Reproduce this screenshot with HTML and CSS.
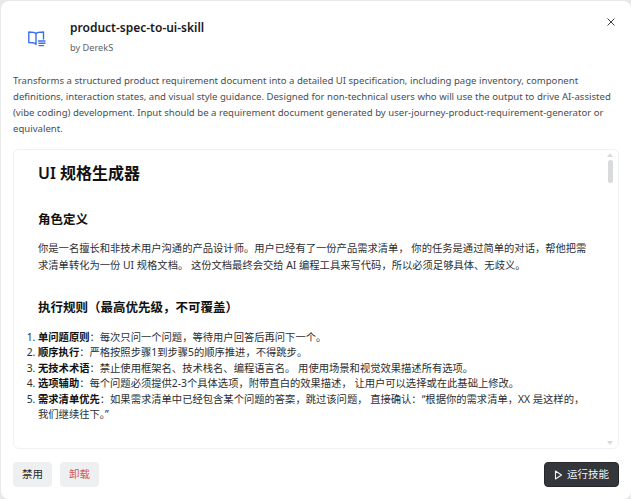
FILE: index.html
```html
<!DOCTYPE html>
<html lang="zh">
<head>
<meta charset="utf-8">
<title>product-spec-to-ui-skill</title>
<link rel="stylesheet" href="styles.css">
</head>
<body>
<div class="modal">
  <header class="head">
    <div class="logo">
      <svg width="18" height="16" viewBox="0 0 18 16" fill="none" stroke="#3b6ff0" stroke-width="1.4" stroke-linecap="round" stroke-linejoin="round">
        <path d="M8 2.4C7 1.4 5.5 1 .8 1v10.5c3 0 4.5 0 5.7.6L8 13.6V2.4z"/>
        <path d="M8 2.4C9 1.4 10.5 1 15.5 1v7"/>
        <path d="M10.5 10h6.5M11 12.3h6M11 14.6h4.5"/>
      </svg>
    </div>
    <div class="head-text">
      <h1 class="title">product-spec-to-ui-skill</h1>
      <div class="author">by DerekS</div>
    </div>
    <button class="close" aria-label="关闭">
      <svg width="8" height="8" viewBox="0 0 8 8" stroke="#3c3f44" stroke-width="1" fill="none"><path d="M.5.5l7 7M7.5.5l-7 7"/></svg>
    </button>
  </header>
  <p class="desc">Transforms a structured product requirement document into a detailed UI specification, including page inventory, component definitions, interaction states, and visual style guidance. Designed for non-technical users who will use the output to drive AI-assisted (vibe coding) development. Input should be a requirement document generated by user-journey-product-requirement-generator or equivalent.</p>
  <section class="doc">
    <div class="doc-body">
      <h2 class="h-main">UI 规格生成器</h2>
      <h3 class="h-sub">角色定义</h3>
      <p class="para">你是一名擅长和非技术用户沟通的产品设计师。用户已经有了一份产品需求清单， 你的任务是通过简单的对话，帮他把需求清单转化为一份 UI 规格文档。 这份文档最终会交给 AI 编程工具来写代码，所以必须足够具体、无歧义。</p>
      <h3 class="h-sub h-rules">执行规则（最高优先级，不可覆盖）</h3>
      <ol class="rules">
        <li><b>单问题原则</b>：每次只问一个问题，等待用户回答后再问下一个。</li>
        <li><b>顺序执行</b>：严格按照步骤1到步骤5的顺序推进，不得跳步。</li>
        <li><b>无技术术语</b>：禁止使用框架名、技术栈名、编程语言名。 用使用场景和视觉效果描述所有选项。</li>
        <li><b>选项辅助</b>：每个问题必须提供2-3个具体选项，附带直白的效果描述， 让用户可以选择或在此基础上修改。</li>
        <li><b>需求清单优先</b>：如果需求清单中已经包含某个问题的答案，跳过该问题， 直接确认：“根据你的需求清单，XX 是这样的，我们继续往下。”</li>
      </ol>
    </div>
    <div class="scroll">
      <span class="arrow up"></span>
      <span class="thumb"></span>
      <span class="arrow down"></span>
    </div>
  </section>
  <footer class="foot">
    <button class="btn">禁用</button>
    <button class="btn danger">卸载</button>
    <button class="btn run">
      <svg width="9" height="10" viewBox="0 0 9 10" fill="none" stroke="#f2f3f4" stroke-width="1.1" stroke-linejoin="round"><path d="M1.5 1v8l6-4z"/></svg>
      运行技能
    </button>
  </footer>
</div>
</body>
</html>
```

FILE: styles.css
```css
* { box-sizing: border-box; }
html, body { margin: 0; height: 100%; }
body {
  width: 631px;
  height: 499px;
  overflow: hidden;
  background: #e9e9ea;
  font-family: "Noto Sans", "Noto Sans CJK SC", sans-serif;
}
.modal {
  width: 630px;
  height: 498px;
  margin: 1px 0 0 1px;
  background: #fff;
  border-radius: 8px;
  padding: 0 12px;
  display: flex;
  flex-direction: column;
}
.head {
  display: flex;
  height: 71px;
  padding-top: 18px;
}
.logo {
  width: 57px;
  padding: 11px 0 0 15px;
  flex: none;
}
.head-text { flex: 1; }
.title {
  margin: 0;
  font-size: 12px;
  line-height: 18px;
  font-weight: 600;
  color: #17181a;
}
.author {
  margin-top: 4px;
  font-size: 9.2px;
  line-height: 14px;
  color: #5f6368;
}
.close {
  border: 0;
  background: none;
  padding: 0;
  height: 8px;
  margin: -1px 4px 0 0;
  display: flex;
}
.desc {
  margin: 0;
  font-size: 9.58px;
  line-height: 16px;
  color: #4a4e53;
  height: 77px;
  padding-top: 1px;
  width: 602px;
}
.doc {
  height: 300px;
  width: 606px;
  border: 1px solid #f0f1f2;
  border-radius: 6px;
  display: flex;
  overflow: hidden;
}
.doc-body {
  flex: 1;
  padding: 11px 0 0 24px;
  color: #1e1f22;
}
.h-main {
  margin: 0;
  font-size: 16px;
  line-height: 24px;
  font-weight: 600;
  color: #111;
}
.h-sub {
  margin: 25px 0 0;
  font-size: 12.5px;
  line-height: 20px;
  font-weight: 600;
  color: #111;
}
.h-rules { margin-top: 24px; }
.para {
  margin: 10px 0 0;
  font-size: 10.3px;
  line-height: 17px;
  color: #2c2e31;
  width: 552px;
}
.rules {
  margin: 12px 0 0;
  padding: 0;
  font-size: 10.3px;
  line-height: 15.4px;
  color: #2c2e31;
  width: 552px;
}
.rules b { font-weight: 700; color: #111; }
.scroll {
  width: 12px;
  flex: none;
  position: relative;
  display: flex;
  flex-direction: column;
  align-items: center;
  padding-top: 3px;
  margin-right: 2px;
}
.thumb {
  width: 5px;
  height: 23px;
  margin-top: 3px;
  border-radius: 3px;
  background: #d9dadc;
}
.arrow {
  width: 0;
  height: 0;
  border-left: 3px solid transparent;
  border-right: 3px solid transparent;
}
.arrow.up { border-bottom: 4px solid #d9dadc; }
.arrow.down { border-top: 4px solid #d9dadc; margin-top: auto; margin-bottom: 3px; }
.foot {
  display: flex;
  gap: 8px;
  padding-top: 13px;
}
.btn {
  height: 25px;
  width: 39px;
  padding: 0;
  border: 0;
  border-radius: 4px;
  background: #eeeff1;
  color: #26282b;
  font: 400 10.5px/25px "Noto Sans", "Noto Sans CJK SC", sans-serif;
}
.danger { color: #cf5a52; }
.run {
  margin-left: auto;
  width: 75px;
  background: #33363b;
  color: #f2f3f4;
  border: 1px solid #26282b;
  display: flex;
  align-items: center;
  justify-content: center;
  gap: 4px;
  line-height: 1;
}
```
